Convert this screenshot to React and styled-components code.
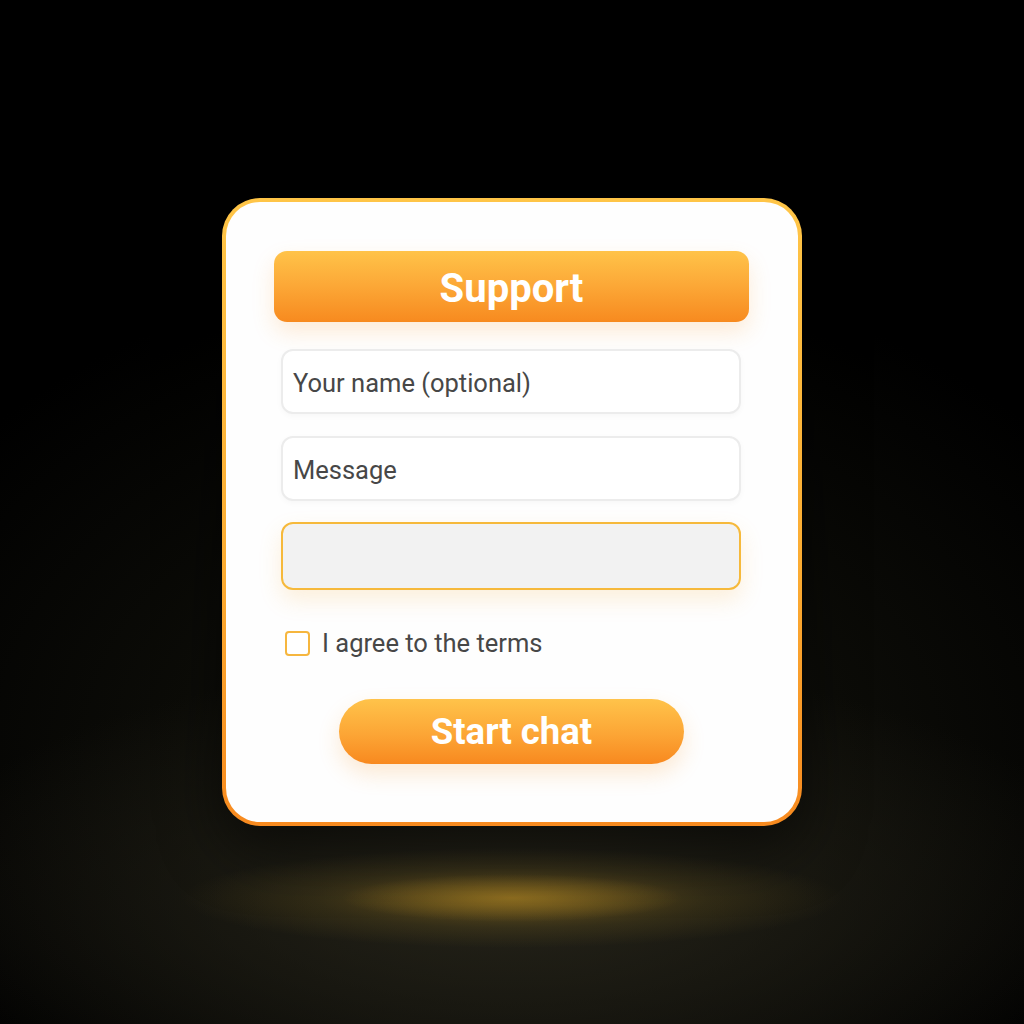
import React from "react";
import styled, { createGlobalStyle } from "styled-components";

const Global = createGlobalStyle`
  html, body { margin: 0; padding: 0; background: #000; }
  * { box-sizing: border-box; }
`;

const Page = styled.div`
  width: 1024px;
  height: 1024px;
  display: flex;
  justify-content: center;
  align-items: flex-start;
  padding-top: 198px;
  font-family: Roboto, "Noto Sans", sans-serif;
  background:
    radial-gradient(ellipse 170px 24px at 512px 898px, rgba(170, 130, 35, 0.55), transparent 100%),
    radial-gradient(ellipse 330px 50px at 512px 898px, rgba(150, 115, 30, 0.6), rgba(110, 90, 30, 0.25) 60%, transparent 100%),
    radial-gradient(ellipse 620px 240px at 512px 900px, rgba(38, 36, 26, 0.9), transparent 100%),
    radial-gradient(ellipse 700px 500px at 512px 760px, #17170f, #000 100%);
`;

const CardFrame = styled.div`
  width: 580px;
  height: 628px;
  border-radius: 38px;
  padding: 4px;
  background: linear-gradient(180deg, #ffc547 0%, #fbab32 60%, #f78a1f 100%);
  box-shadow: 0 20px 60px rgba(0, 0, 0, 0.6);
`;

const Card = styled.div`
  height: 100%;
  border-radius: 34px;
  background: #fefefe;
  padding: 49px 49px 0 48px;
  display: flex;
  flex-direction: column;
`;

const Header = styled.div`
  height: 71px;
  border-radius: 13px;
  background: linear-gradient(180deg, #ffc349 0%, #fca736 50%, #f78a1f 100%);
  box-shadow: 0 10px 22px rgba(247, 150, 40, 0.18);
  display: flex;
  align-items: center;
  justify-content: center;
  padding-top: 3px;
  color: #fff;
  font-size: 40px;
  font-weight: 700;
`;

const Fields = styled.div`
  display: flex;
  flex-direction: column;
  padding: 0 8px 0 7px;
  margin-top: 27px;
`;

const Field = styled.div`
  height: ${(p) => (p.$focus ? "68px" : "65px")};
  margin-bottom: ${(p) => p.$mb || 0}px;
  border-radius: 12px;
  border: ${(p) => (p.$focus ? "2px solid #f6b93b" : "2px solid #ececec")};
  background: ${(p) => (p.$focus ? "#f2f2f2" : "#fff")};
  box-shadow: ${(p) =>
    p.$focus ? "0 10px 22px rgba(246, 170, 60, 0.18)" : "0 2px 6px rgba(0,0,0,0.03)"};
  display: flex;
  align-items: center;
  padding-left: 10px;
  padding-top: 2px;
  color: #474747;
  font-size: 25.5px;
`;

const CheckRow = styled.label`
  display: flex;
  align-items: center;
  gap: 12px;
  margin-top: 38px;
  padding-left: 4px;
  color: #474747;
  font-size: 25.5px;
`;

const Box = styled.span`
  width: 25px;
  height: 25px;
  flex: none;
  border: 2.5px solid #f6b63e;
  border-radius: 4px;
  background: #fff;
`;

const ButtonWrap = styled.div`
  display: flex;
  justify-content: center;
  margin-top: 41px;
`;

const Button = styled.div`
  width: 345px;
  height: 65px;
  border-radius: 33px;
  background: linear-gradient(180deg, #ffc34a 0%, #fca535 55%, #f8891f 100%);
  box-shadow: 0 10px 22px rgba(247, 150, 40, 0.2);
  display: flex;
  align-items: center;
  justify-content: center;
  color: #fff;
  font-size: 36.5px;
  font-weight: 700;
`;

export default function App() {
  return (
    <>
      <Global />
      <Page>
        <CardFrame>
          <Card>
            <Header>Support</Header>
            <Fields>
              <Field $mb={22}>Your name (optional)</Field>
              <Field $mb={21}>Message</Field>
              <Field $focus />
              <CheckRow>
                <Box />
                I agree to the terms
              </CheckRow>
            </Fields>
            <ButtonWrap>
              <Button>Start chat</Button>
            </ButtonWrap>
          </Card>
        </CardFrame>
      </Page>
    </>
  );
}
